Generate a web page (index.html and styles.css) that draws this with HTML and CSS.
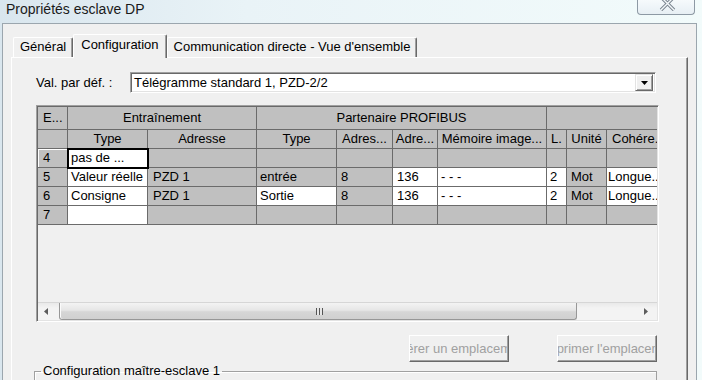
FILE: index.html
```html
<!DOCTYPE html>
<html>
	<head>
		<meta charset="utf-8" />
		<title>Propriétés esclave DP</title>
		<link rel="stylesheet" href="styles.css">
	</head>
	<body>
		<div class="titlebar">
			<span class="title">Propriétés esclave DP</span>
			<div class="close">
				<svg width="17" height="11" viewBox="0 0 17 11">
					<path d="M2 -3 L15 10 M15 -3 L2 10" stroke="#7a8590" stroke-width="3.4" fill="none" />
					<path d="M2 -3 L15 10 M15 -3 L2 10" stroke="#f4f8fa" stroke-width="1.4" fill="none" />
				</svg>
			</div>
		</div>

		<div class="window">
			<div class="tabs">
				<div class="tab">Général</div>
				<div class="tab active">Configuration</div>
				<div class="tab">Communication directe - Vue d'ensemble</div>
			</div>

			<div class="panel">
				<div class="val-row">
					<span class="val-label">Val. par déf. :</span>
					<div class="combo">
						<span class="combo-text">Télégramme standard 1, PZD-2/2</span>
						<div class="combo-btn">
							<svg width="7" height="4" viewBox="0 0 7 4"><path d="M0 0 H7 L3.5 4 Z" fill="#000" /></svg>
						</div>
					</div>
				</div>

				<div class="grid-frame">
					<div class="grid-view">
						<div class="grid">
							<!-- header row 1 -->
							<div class="hd1 left">E...</div>
							<div class="hd1 span2">Entraînement</div>
							<div class="hd1 span4">Partenaire PROFIBUS</div>
							<div class="hd1 span3"></div>
							<!-- header row 2 -->
							<div></div>
							<div class="hd">Type</div>
							<div class="hd">Adresse</div>
							<div class="hd">Type</div>
							<div class="hd">Adres...</div>
							<div class="hd">Adre...</div>
							<div class="hd">Mémoire image...</div>
							<div class="hd">L.</div>
							<div class="hd">Unité</div>
							<div class="hd clip">Cohére.</div>
							<!-- row 4 -->
							<div class="rh current">4</div>
							<div class="w sel">pas de ...</div>
							<div></div><div></div><div></div><div></div><div></div><div></div><div></div><div></div>
							<!-- row 5 -->
							<div class="rh">5</div>
							<div class="w">Valeur réelle</div>
							<div class="pzd">PZD 1</div>
							<div>entrée</div>
							<div class="num">8</div>
							<div class="w num">136</div>
							<div class="w">- - -</div>
							<div class="w">2</div>
							<div class="num">Mot</div>
							<div class="w tight">Longue...</div>
							<!-- row 6 -->
							<div class="rh">6</div>
							<div class="w">Consigne</div>
							<div class="pzd">PZD 1</div>
							<div class="w">Sortie</div>
							<div class="num">8</div>
							<div class="w num">136</div>
							<div class="w">- - -</div>
							<div class="w">2</div>
							<div class="num">Mot</div>
							<div class="w tight">Longue...</div>
							<!-- row 7 -->
							<div class="rh">7</div>
							<div class="w"></div>
							<div></div><div></div><div></div><div></div><div></div><div></div><div></div><div></div>
						</div>
					</div>
					<div class="hscroll">
						<div class="arrow-l"><svg width="4" height="7" viewBox="0 0 4 7"><path d="M4 0 V7 L0 3.5 Z" fill="#5c5c5c" /></svg></div>
						<div class="track">
							<div class="thumb"><span class="grip"></span></div>
						</div>
						<div class="arrow-r"><svg width="4" height="7" viewBox="0 0 4 7"><path d="M0 0 V7 L4 3.5 Z" fill="#5c5c5c" /></svg></div>
					</div>
				</div>

				<div class="buttons">
					<button class="btn" disabled><span>Insérer un emplacement</span></button>
					<button class="btn" disabled><span>Supprimer l'emplacement</span></button>
				</div>

				<fieldset class="group">
					<legend>Configuration maître-esclave 1</legend>
				</fieldset>
			</div>
		</div>
	</body>
</html>
```

FILE: styles.css
```css
* {
	box-sizing: border-box;
}
html,
body {
	margin: 0;
}
body {
	width: 702px;
	height: 380px;
	overflow: hidden;
	font-family: "Liberation Sans", Arial, sans-serif;
	font-size: 13px;
	color: #000;
	background: linear-gradient(to right, #d9e6ee, #e9f3f7 35%, #f2fbfb);
}

/* title bar */
.titlebar {
	height: 23px;
	display: flex;
	align-items: flex-start;
}
.title {
	font-size: 14px;
	line-height: 19px;
	padding-left: 6px;
	color: #1a1a1a;
}
.close {
	margin-left: auto;
	margin-right: 7px;
	width: 58px;
	height: 15px;
	border: 1px solid #8d99a4;
	border-top: none;
	border-radius: 0 0 4px 4px;
	background: linear-gradient(#f6fafc, #e7eff4);
	display: flex;
	justify-content: center;
	align-items: flex-start;
}
.close svg {
	display: block;
	margin-left: 2px;
}

/* window */
.window {
	margin: 0 5px 0 2px;
	height: 357px;
	overflow: hidden;
	border: 1px solid #9ba6ae;
	border-bottom: none;
	background: #f0f0f0;
	padding: 10px 8px 0;
}
.tabs {
	display: flex;
	align-items: flex-end;
	height: 23px;
	padding-left: 2px;
}
.tab {
	height: 20px;
	line-height: 18px;
	padding: 0 6px;
	border: 1px solid;
	border-color: #fff #696969 transparent #fff;
	border-bottom: none;
	border-radius: 2px 2px 0 0;
	box-shadow: inset -1px 0 #a0a0a0;
	white-space: nowrap;
}
.tab.active {
	height: 24px;
	margin-bottom: -1px;
	padding: 1px 7px 0;
	position: relative;
	z-index: 1;
	background: #f0f0f0;
}

.panel {
	height: 323px;
	border: 1px solid;
	border-color: #fff #696969 #696969 #fff;
	border-bottom: none;
	box-shadow: inset -1px 0 #a0a0a0;
	padding: 14px 28px 0 24px;
}

/* default value combo */
.val-row {
	display: flex;
	height: 21px;
}
.val-label {
	width: 94px;
	line-height: 21px;
}
.combo {
	width: 526px;
	height: 21px;
	display: flex;
	align-items: center;
	background: #fff;
	border: 1px solid;
	border-color: #a0a0a0 #fff #fff #a0a0a0;
	box-shadow: inset 1px 1px #696969, inset -1px -1px #e3e3e3;
	padding: 1px 2px 1px 3px;
}
.combo-text {
	flex: 1;
	line-height: 17px;
}
.combo-btn {
	width: 18px;
	height: 17px;
	background: #f0f0f0;
	border: 1px solid;
	border-color: #e3e3e3 #696969 #696969 #e3e3e3;
	box-shadow: inset 1px 1px #fff, inset -1px -1px #a0a0a0;
	display: flex;
	justify-content: center;
	align-items: center;
}
.combo-btn svg {
	display: block;
}

/* slot table */
.grid-frame {
	margin-top: 12px;
	height: 217px;
	border: 1px solid;
	border-color: #a0a0a0 #fff #fff #a0a0a0;
	box-shadow: inset 1px 1px #696969, inset -1px -1px #e3e3e3;
	padding: 1px;
}
.grid-view {
	height: 195px;
	overflow: hidden;
	background: #f0f0f0;
}
.grid {
	display: grid;
	grid-template-columns: 30px 80px 109px 80px 56px 45px 109px 20px 40px 60px;
	grid-template-rows: 23px;
	grid-auto-rows: 19px;
	width: 629px;
}
.grid div {
	background: #c0c0c0;
	border-right: 1px solid #6b6b6b;
	border-bottom: 1px solid #6b6b6b;
	line-height: 18px;
	padding: 0 3px;
	white-space: nowrap;
	overflow: hidden;
}
.grid .hd1 {
	line-height: 22px;
	text-align: center;
}
.grid .hd1.left {
	text-align: left;
	padding-left: 5px;
}
.grid .span2 {
	grid-column: span 2;
}
.grid .span3 {
	grid-column: span 3;
}
.grid .span4 {
	grid-column: span 4;
}
.grid .hd {
	text-align: center;
	padding: 0 1px;
}
.grid .hd.clip {
	text-align: left;
	padding-left: 5px;
}
.grid .rh {
	padding-left: 5px;
}
.grid .current {
	box-shadow: inset 1px 1px #fff;
}
.grid .w {
	background: #fff;
}
.grid .pzd {
	padding-left: 5px;
}
.grid .num {
	padding-left: 4px;
}
.grid .tight {
	padding-left: 1px;
}
.grid .sel {
	position: relative;
	z-index: 1;
	overflow: visible;
	outline: 2px solid #000;
	outline-offset: -1px;
}

/* horizontal scrollbar */
.hscroll {
	height: 18px;
	display: flex;
	background: linear-gradient(#e9e9e9, #f3f3f3 30%, #f3f3f3);
	border-top: 1px solid #d6d6d6;
}
.arrow-l,
.arrow-r {
	display: flex;
	align-items: center;
}
.arrow-l {
	width: 21px;
	padding-left: 6px;
}
.arrow-r {
	width: 19px;
	padding-left: 6px;
}
.track {
	flex: 1;
	display: flex;
}
.thumb {
	width: 518px;
	border: 1px solid #979797;
	border-top: none;
	border-radius: 0 0 3px 3px;
	background: linear-gradient(#f3f3f3, #e6e6e6 45%, #d6d6d6 55%, #d0d0d0);
	box-shadow: inset 1px 0 #fbfbfb;
	display: flex;
	justify-content: center;
	align-items: center;
}
.grip {
	width: 7px;
	height: 7px;
	margin-left: 2px;
	background: repeating-linear-gradient(to right, #555 0 1px, #e6e6e6 1px 3px);
}

/* slot buttons */
.buttons {
	margin-top: 13px;
	display: flex;
	justify-content: flex-end;
	gap: 48px;
	padding-right: 2px;
}
.btn {
	width: 100px;
	height: 27px;
	padding: 0;
	background: #f0f0f0;
	border: 1px solid;
	border-color: #fff #696969 #696969 #fff;
	box-shadow: inset -1px -1px #a0a0a0;
	font-family: inherit;
	font-size: 13px;
	color: #a0a0a0;
	display: flex;
	justify-content: center;
	align-items: center;
	overflow: hidden;
	white-space: nowrap;
}

/* master-slave group */
.group {
	margin: 1px 0 0 -2px;
	width: 623px;
	height: 17px;
	border: 1px solid #a0a0a0;
	border-bottom: none;
	box-shadow: inset 1px 1px #fff;
	padding: 0;
	min-width: 0;
}
.group legend {
	margin-left: 6px;
	padding: 0 2px;
	line-height: 16px;
}
```
